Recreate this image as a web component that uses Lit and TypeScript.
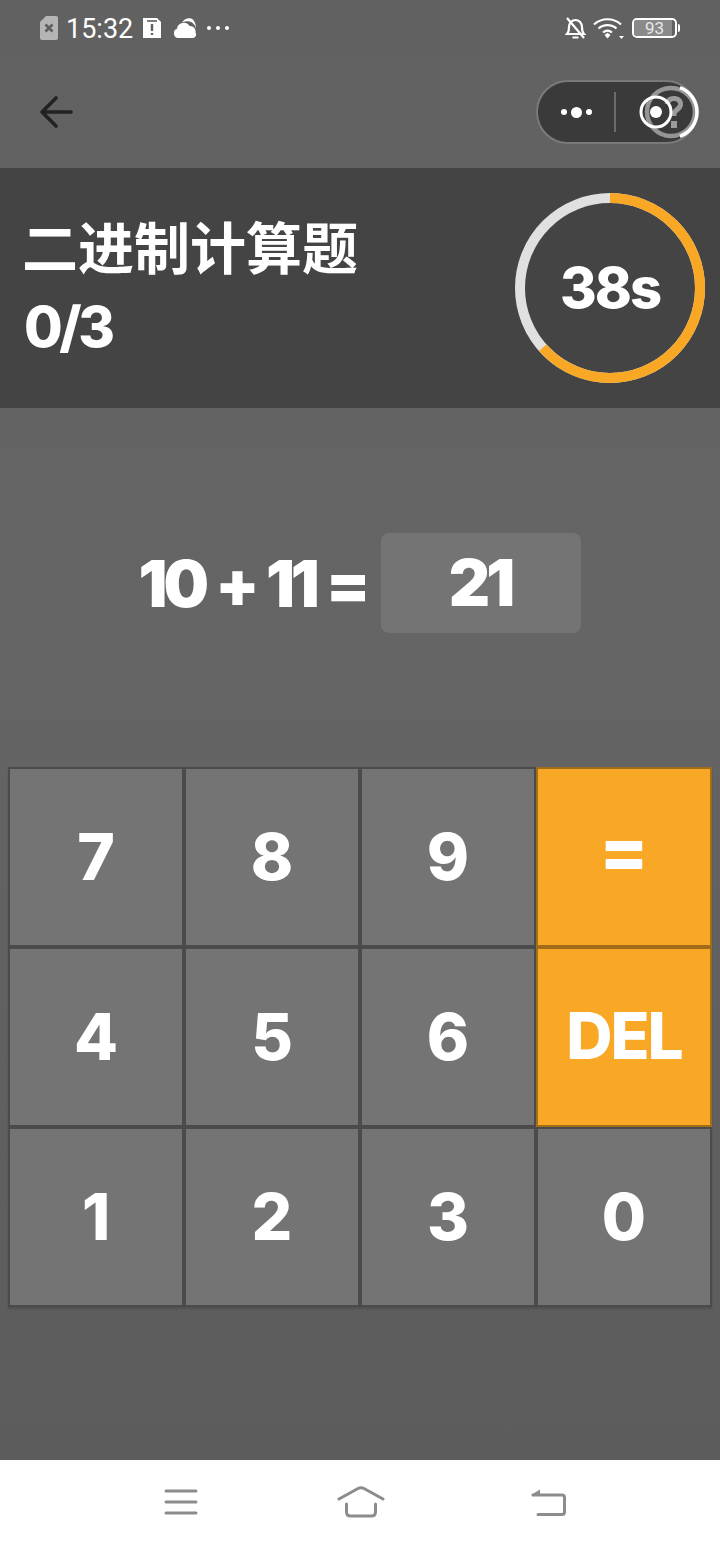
import {LitElement, html, css} from 'lit';
import {customElement} from 'lit/decorators.js';

const KEYS = ['7', '8', '9', '=', '4', '5', '6', 'DEL', '1', '2', '3', '0'];

// ring: 38 of 60 seconds
const R = 90;
const CIRC = 2 * Math.PI * R;
const PROGRESS = 228 / 360;

@customElement('app-root')
export class AppRoot extends LitElement {
  keyClass(k: string) {
    if (k === '=') return 'key hot eq';
    if (k === 'DEL') return 'key hot del';
    return 'key';
  }

  render() {
    return html`
      <div class="page">
        <div class="status">
          <svg class="sim" width="18" height="24" viewBox="0 0 18 24">
            <path d="M6 0h10a2 2 0 0 1 2 2v20a2 2 0 0 1-2 2H2a2 2 0 0 1-2-2V6z" fill="#b5b5b5" />
            <path d="M5.500 8.500l7 7m0-7l-7 7" stroke="#5f5f5f" stroke-width="2.600" />
          </svg>
          <span class="time">15:32</span>
          <svg class="card" width="18" height="20" viewBox="0 0 18 20">
            <path d="M0 0h14l4 4v16H0z" fill="#fff" />
            <path d="M4 3h10" stroke="#5f5f5f" stroke-width="1.600" />
            <path d="M9 6v7m0 2v2" stroke="#5f5f5f" stroke-width="2.400" />
          </svg>
          <svg class="cloud" width="22" height="20" viewBox="0 0 22 20">
            <path d="M8 4.500C10 1 14-.5 17 .5c3 1 5 5 5 10-1-4-3.500-6.500-6.500-7-2.500-.5-5 0-7.500 1z" fill="#fff" />
            <path d="M5 20a4.800 4.800 0 0 1-2-9.300A6.800 6.800 0 0 1 15.500 8a5.500 5.500 0 0 1 6 6.500A3.500 3.500 0 0 1 18.500 20z" fill="#fff" />
          </svg>
          <svg class="more" width="22" height="4" viewBox="0 0 22 4">
            <circle cx="2" cy="2" r="2" fill="#fff" /><circle cx="11" cy="2" r="2" fill="#fff" /><circle cx="20" cy="2" r="2" fill="#fff" />
          </svg>
          <span class="grow"></span>
          <svg width="21" height="23" viewBox="0 0 21 23" fill="none" stroke="#fff" stroke-width="2.200">
            <path d="M2 17c2-2 2-4 2-7 0-4 3-7 6.500-7s6.500 3 6.500 7c0 3 0 5 2 7z" />
            <path d="M7.500 20.500h6M2 1l17 20" />
          </svg>
          <svg class="wifi" width="31" height="21" viewBox="0 0 31 21" fill="none" stroke="#fff" stroke-width="2.200">
            <path d="M1 6.500C8.500-.5 20.500-.5 28 6.500M5.500 10.500c5-4.500 13-4.500 18 0M10 14.500c2.800-2.400 6.200-2.400 9 0" />
            <path d="M11.500 17l3-2.300 3 2.300-3 3.500z" fill="#fff" stroke="none" />
            <path d="M26 18h5l-2.500 3z" fill="#fff" stroke="none" />
          </svg>
          <div class="battery">
            <div class="cell"><div class="fill"></div><span>93</span></div>
            <div class="nub"></div>
          </div>
        </div>

        <div class="nav">
          <svg width="34" height="32" viewBox="0 0 34 32" fill="none" stroke="#222" stroke-width="3.600" stroke-linecap="round" stroke-linejoin="round">
            <path d="M32 16H3M17 2L3 16l14 14" />
          </svg>
          <div class="capsule">
            <div class="dots"><i></i><b></b><i></i></div>
            <div class="divider"></div>
            <svg class="help" width="60" height="60" viewBox="0 0 60 60" fill="none">
              <circle cx="29" cy="30" r="24" stroke="#959595" stroke-width="4.500" />
              <path d="M38 5.600a26 26 0 0 1 0 48.800" stroke="#fff" stroke-width="3.500" />
              <path d="M25 22c1-4 4-6 8-5.500 4 .5 6 3 5.500 6.500-.5 3-3 4-5 6-1.500 1-1.500 3-1.500 5" stroke="#9b9b9b" stroke-width="5" />
              <rect x="29" y="39" width="6" height="7" fill="#9b9b9b" />
            </svg>
            <svg class="target" width="40" height="40" viewBox="0 0 40 40">
              <circle cx="20" cy="20" r="15" fill="none" stroke="#fff" stroke-width="3" />
              <circle cx="20" cy="20" r="6" fill="#fff" />
            </svg>
          </div>
        </div>

        <div class="head">
          <div class="title">
            <div class="name">二进制计算题</div>
            <div class="score">0/3</div>
          </div>
          <div class="ring">
            <svg width="190" height="190" viewBox="0 0 190 190" fill="none" stroke-width="10">
              <circle cx="95" cy="95" r="${R}" stroke="#e0e0e0" />
              <circle cx="95" cy="95" r="${R}" stroke="#f9a825"
                stroke-dasharray="${CIRC * PROGRESS} ${CIRC}"
                transform="rotate(-90 95 95)" />
            </svg>
            <span>38s</span>
          </div>
        </div>

        <div class="sum">
          <span class="expr">10 + 11 =</span>
          <div class="answer">21</div>
        </div>

        <div class="keys">
          ${KEYS.map((k) => html`<div class="${this.keyClass(k)}">${k}</div>`)}
        </div>

        <span class="grow"></span>

        <div class="bottom">
          <svg width="34" height="26" viewBox="0 0 34 26" fill="none" stroke="#8c8c8c" stroke-width="3" stroke-linecap="round">
            <path d="M2 2h30M2 13h30M2 24h30" />
          </svg>
          <svg width="48" height="32" viewBox="0 0 48 32" fill="none" stroke="#8c8c8c" stroke-width="3" stroke-linecap="round" stroke-linejoin="round">
            <path d="M2 13L21 2.500q3-1.500 6 0L46 13" />
            <path d="M9.500 18v8q0 4 4 4h21q4 0 4-4v-8" />
          </svg>
          <svg class="back" width="36" height="28" viewBox="0 0 36 28" fill="none" stroke="#8c8c8c" stroke-width="3" stroke-linecap="round" stroke-linejoin="round">
            <path d="M3 7h29q2.500 0 2.500 2.500V24q0 2.500-2.500 2.500H8" />
            <path d="M1 7l9-5.500V7z" fill="#8c8c8c" stroke="none" />
          </svg>
        </div>
      </div>
    `;
  }

  static styles = css`
    :host {
      display: block;
      font-family: Inter, 'Noto Sans CJK SC', sans-serif;
      color: #fff;
    }
    .page {
      display: flex;
      flex-direction: column;
      height: 1544px;
      overflow: hidden;
      background: linear-gradient(#616161, #656565 40%, #5c5c5c 95%);
    }
    .grow {
      flex: 1;
    }

    .status {
      display: flex;
      align-items: center;
      height: 56px;
      padding: 0 40px;
      flex: none;
    }
    .time {
      font-family: Roboto, sans-serif;
      font-size: 27px;
      line-height: 56px;
      margin: 2px 10px 0 8px;
      color: #fff;
    }
    .card {
      margin-right: 13px;
    }
    .cloud {
      margin-right: 11px;
    }
    .wifi {
      margin: 0 8px 0 7px;
    }
    .battery {
      display: flex;
      align-items: center;
    }
    .cell {
      position: relative;
      width: 41px;
      height: 16px;
      border: 2px solid #fff;
      border-radius: 5px;
      font-family: Roboto, sans-serif;
      font-size: 17px;
      line-height: 16px;
      text-align: center;
      color: #e8e8e8;
      overflow: hidden;
    }
    .cell span {
      position: relative;
    }
    .fill {
      position: absolute;
      inset: 0 3px 0 0;
      background: #8a8a8a;
    }
    .nub {
      width: 2px;
      height: 8px;
      margin-left: 1px;
      background: #fff;
      border-radius: 0 2px 2px 0;
    }

    .nav {
      display: flex;
      align-items: center;
      justify-content: space-between;
      height: 112px;
      padding: 0 22px 0 39px;
      flex: none;
    }
    .capsule {
      position: relative;
      display: flex;
      align-items: center;
      width: 158px;
      height: 60px;
      border: 2px solid #7a7a7a;
      border-radius: 32px;
      background: #3a3a3a;
    }
    .dots {
      display: flex;
      align-items: center;
      gap: 4px;
      margin-left: 23px;
    }
    .dots i {
      width: 6px;
      height: 6px;
      border-radius: 50%;
      background: #fff;
    }
    .dots b {
      width: 11px;
      height: 11px;
      border-radius: 50%;
      background: #fff;
    }
    .divider {
      width: 2px;
      height: 40px;
      margin-left: 22px;
      background: #6b6b6b;
    }
    .target {
      margin-left: 20px;
      position: relative;
    }
    .help {
      position: absolute;
      left: 104px;
      top: 0;
    }

    .head {
      display: flex;
      align-items: center;
      justify-content: space-between;
      height: 240px;
      padding: 0 15px 0 24px;
      background: #444;
      flex: none;
    }
    .title {
      font-size: 56px;
      font-weight: 700;
      line-height: 78px;
    }
    .name {
      margin-left: -2px;
    }
    .score {
      font-weight: 800;
      letter-spacing: -3.500px;
    }
    .ring {
      position: relative;
      display: grid;
      place-items: center;
      width: 190px;
      height: 190px;
    }
    .ring svg {
      position: absolute;
      inset: 0;
    }
    .ring span {
      font-size: 56px;
      font-weight: 800;
      letter-spacing: -2px;
    }

    .sum {
      display: flex;
      align-items: center;
      justify-content: center;
      gap: 15px;
      padding: 125px 0 134px;
      flex: none;
    }
    .expr {
      font-size: 64px;
      font-weight: 900;
      letter-spacing: -4px;
      word-spacing: 1.500px;
      white-space: nowrap;
    }
    .answer {
      box-sizing: border-box;
      width: 200px;
      height: 100px;
      padding-right: 3px;
      border-radius: 8px;
      background: #747474;
      font-size: 64px;
      font-weight: 900;
      letter-spacing: -4px;
      line-height: 100px;
      text-align: center;
    }

    .keys {
      display: grid;
      grid-template-columns: repeat(4, 176px);
      grid-auto-rows: 180px;
      margin: 0 8px;
      box-shadow: 0 2px 2px rgba(0, 0, 0, 0.15);
      flex: none;
    }
    .key {
      display: flex;
      align-items: center;
      justify-content: center;
      box-sizing: border-box;
      padding-bottom: 2px;
      border: 2px solid rgba(0, 0, 0, 0.35);
      background: #747474;
      font-size: 64px;
      font-weight: 850;
    }
    .key.hot {
      background: #f9a825;
    }
    .key.eq {
      padding-bottom: 16px;
      font-size: 72px;
    }
    .key.del {
      padding-bottom: 4px;
      font-weight: 800;
      letter-spacing: -2px;
    }

    .bottom {
      display: flex;
      align-items: center;
      height: 84px;
      padding-left: 164px;
      gap: 139px;
      background: #fff;
      flex: none;
    }
    .back {
      margin-left: 6px;
    }
  `;
}

declare global {
  interface HTMLElementTagNameMap {
    'app-root': AppRoot;
  }
}
